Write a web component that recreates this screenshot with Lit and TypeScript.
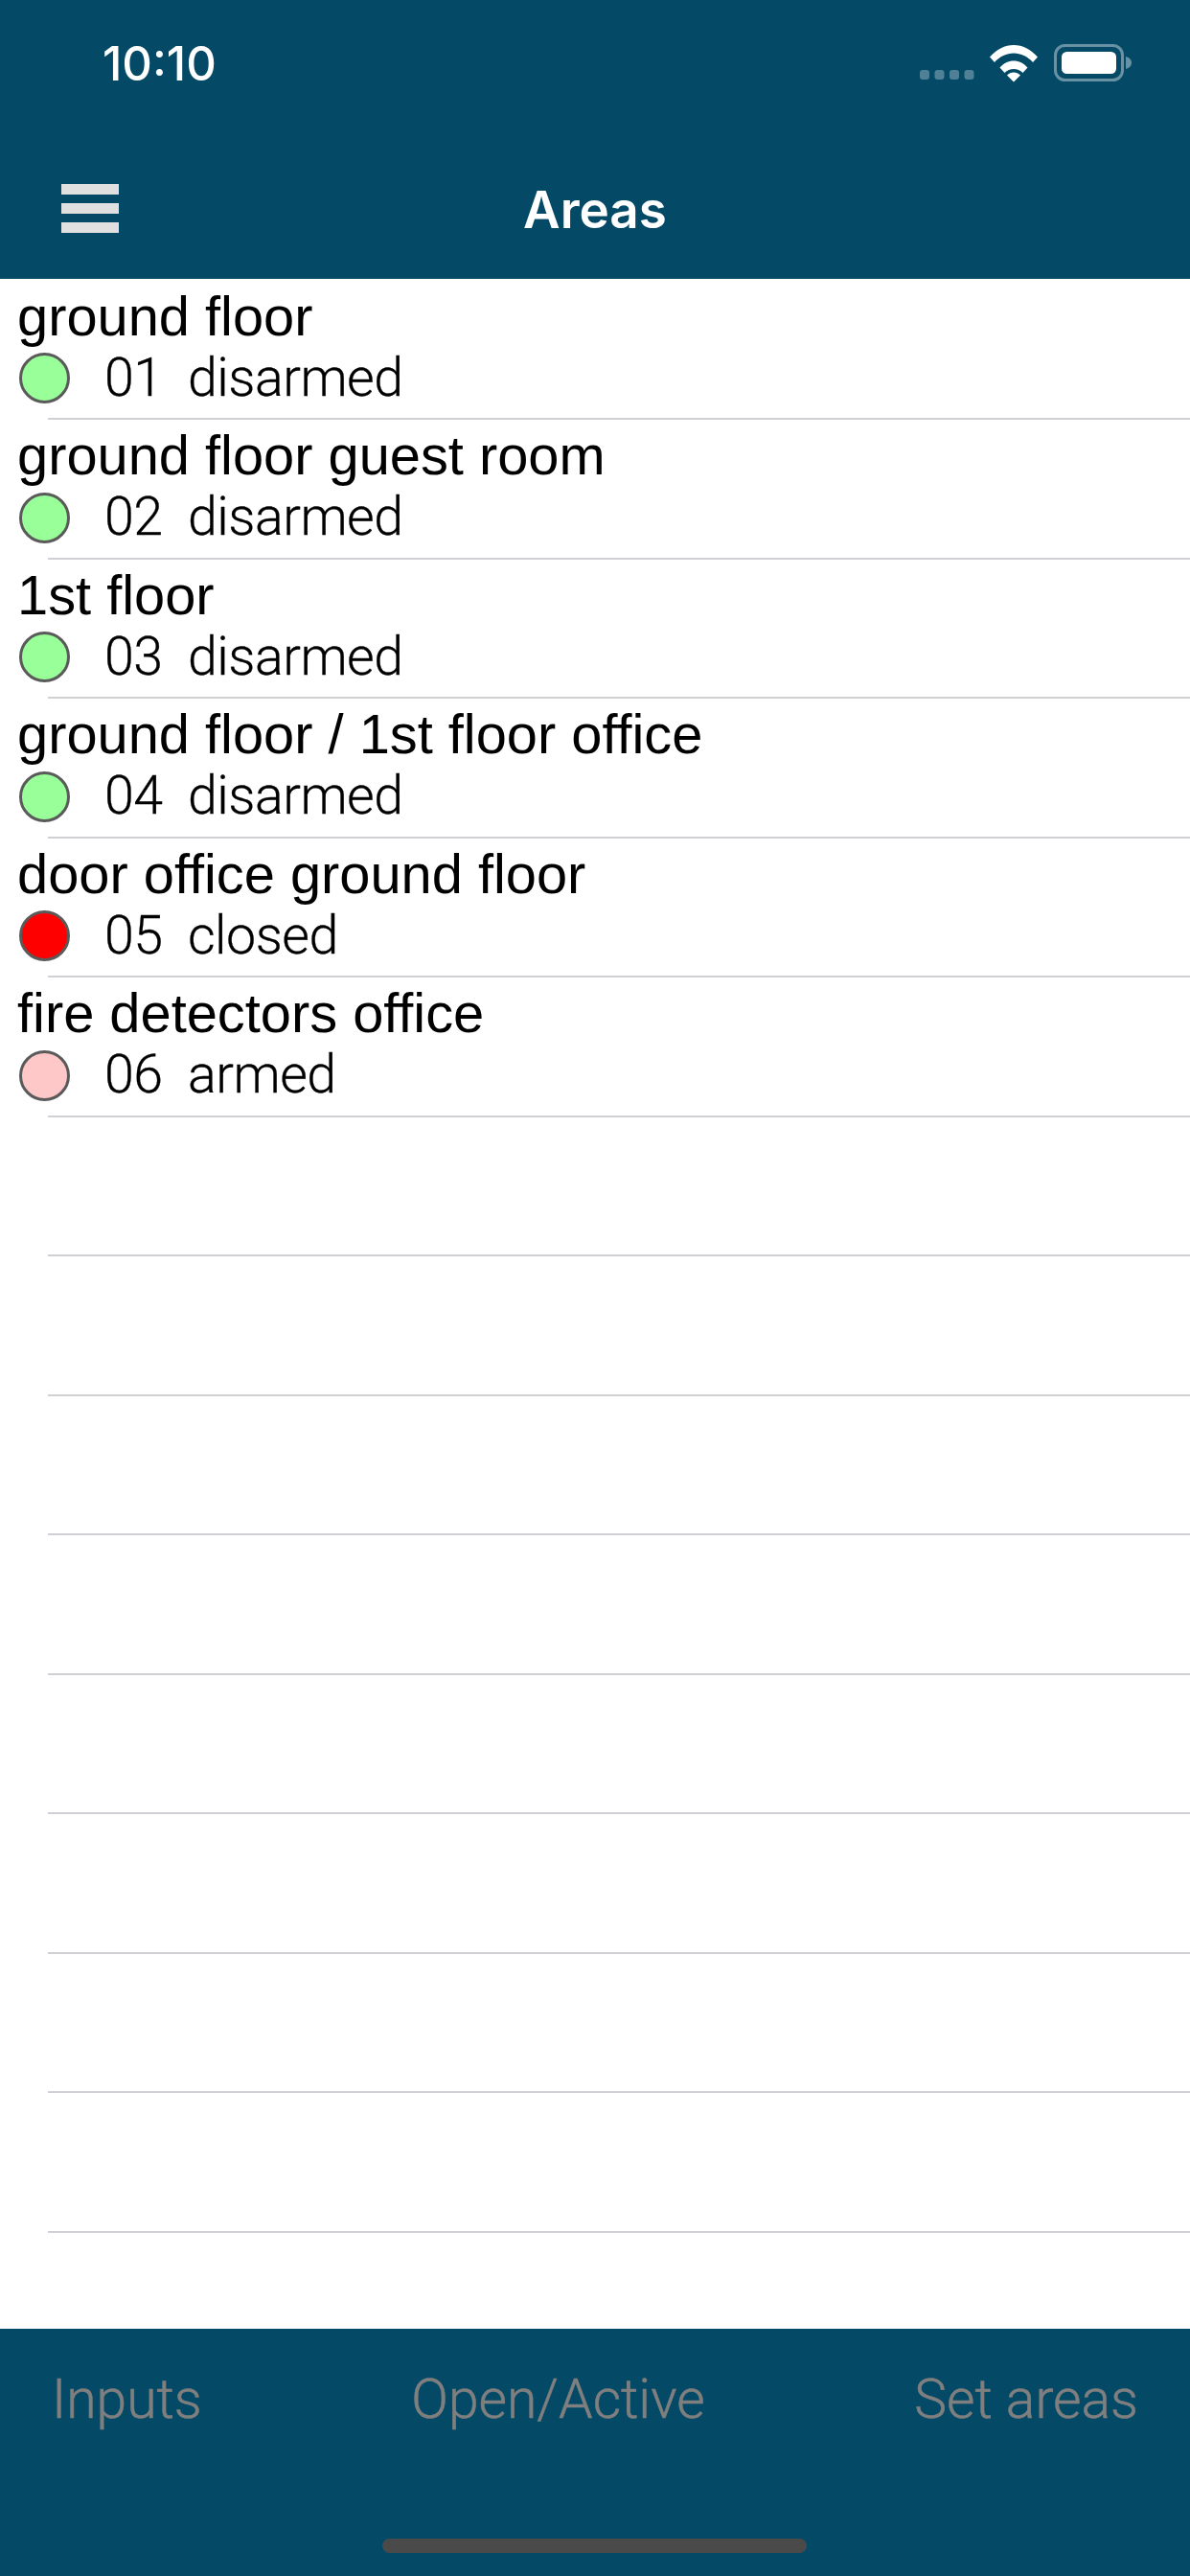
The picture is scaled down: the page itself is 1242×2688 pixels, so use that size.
import { LitElement, html, css } from 'lit';
import { customElement } from 'lit/decorators.js';

interface Area {
  name: string;
  num: string;
  status: string;
  color: string;
}

const AREAS: Area[] = [
  { name: 'ground floor', num: '01', status: 'disarmed', color: '#99ff99' },
  { name: 'ground floor guest room', num: '02', status: 'disarmed', color: '#99ff99' },
  { name: '1st floor', num: '03', status: 'disarmed', color: '#99ff99' },
  { name: 'ground floor / 1st floor office', num: '04', status: 'disarmed', color: '#99ff99' },
  { name: 'door office ground floor', num: '05', status: 'closed', color: '#ff0000' },
  { name: 'fire detectors office', num: '06', status: 'armed', color: '#ffc8c8' },
];

const EMPTY_ROWS = 8;

@customElement('app-root')
export class AppRoot extends LitElement {
  static styles = css`
    :host {
      display: flex;
      flex-direction: column;
      width: 1242px;
      height: 2688px;
      background: #fff;
      font-family: 'Liberation Sans', Arial, sans-serif;
      overflow: hidden;
    }

    header {
      height: 291px;
      background: #044a67;
      color: #fff;
      flex: none;
    }

    .status {
      display: flex;
      align-items: center;
      justify-content: space-between;
      height: 132px;
      padding: 0 60px 0 107px;
    }

    .time {
      font: 500 49px/1 Inter, 'Liberation Sans', sans-serif;
    }

    .status svg {
      display: block;
    }

    .nav {
      position: relative;
      display: flex;
      justify-content: center;
      align-items: center;
      box-sizing: border-box;
      height: 159px;
      padding-top: 16px;
      font: 600 53px/1 Inter, 'Liberation Sans', sans-serif;
    }

    .menu {
      position: absolute;
      left: 64px;
      top: 60px;
      display: flex;
      flex-direction: column;
      gap: 9px;
      width: 60px;
    }

    .menu span {
      height: 11px;
      background: #e0e0e0;
    }

    .list {
      flex: 1;
      padding-top: 1.5px;
    }

    .row {
      box-sizing: border-box;
      height: 143.5px;
      padding: 0 20px;
      overflow: hidden;
    }

    .sep {
      height: 2px;
      margin-left: 50px;
      background: #d0d0d4;
    }

    .name {
      font-size: 57.800px;
      line-height: 64px;
      margin: 5px 0 0 -2px;
      color: #000;
      white-space: nowrap;
      font-variant-ligatures: none;
    }

    .detail {
      display: flex;
      align-items: center;
      height: 62px;
      margin-top: 2px;
      font: 300 55.500px/62px Roboto, 'Liberation Sans', sans-serif;
      letter-spacing: -0.5px;
      -webkit-text-stroke: 0.3px #000;
      color: #000;
    }

    .dot {
      box-sizing: border-box;
      flex: none;
      width: 53px;
      height: 53px;
      border: 3px solid #5a5a5a;
      border-radius: 50%;
      margin-right: 36px;
    }

    .num {
      flex: none;
      width: 87px;
    }

    footer {
      position: relative;
      flex: none;
      height: 258px;
      background: #044a67;
      color: #7f7f7f;
    }

    .tabs {
      display: flex;
      justify-content: space-between;
      padding: 40px 54px 0 54px;
      font: 300 57px/1.2 Roboto, 'Liberation Sans', sans-serif;
      -webkit-text-stroke: 0.5px #7f7f7f;
    }

    .home {
      position: absolute;
      left: 399px;
      top: 219px;
      width: 443px;
      height: 15px;
      border-radius: 8px;
      background: #4a4a4a;
    }
  `;

  renderStatusIcons() {
    return html`
      <svg width="222" height="40" viewBox="0 0 222 40">
        <g fill="#fff" fill-opacity="0.3">
          <rect x="0" y="27" width="10" height="10" rx="3"></rect>
          <rect x="15.5" y="27" width="10" height="10" rx="3"></rect>
          <rect x="31" y="27" width="10" height="10" rx="3"></rect>
          <rect x="46.5" y="27" width="10" height="10" rx="3"></rect>
        </g>
        <path
          fill="#fff"
          d="M73 13.5C80 5.5 89 1 98 1s18 4.500 25 12.500l-5 5.500C112.500 13 105.500 9.500 98 9.500S83.500 13 78 19zM83.500 24.500C87.500 20 92.500 17.500 98 17.500s10.500 2.500 14.500 7l-5 5.500C105 27.500 101.500 26 98 26s-7 1.500-9.500 4zM91 32.500c2-2 4.500-3 7-3s5 1 7 3l-7 7z"
        ></path>
        <rect x="141.500" y="1.500" width="70" height="36" rx="10" fill="none" stroke="#fff" stroke-opacity="0.4" stroke-width="3"></rect>
        <rect x="148" y="8" width="57" height="23" rx="5.500" fill="#fff"></rect>
        <path fill="#fff" fill-opacity="0.4" d="M215 13c4 1 6 3.500 6 6.500s-2 5.500-6 6.500z"></path>
      </svg>
    `;
  }

  render() {
    return html`
      <header>
        <div class="status">
          <span class="time">10:10</span>
          ${this.renderStatusIcons()}
        </div>
        <div class="nav">
          <div class="menu"><span></span><span></span><span></span></div>
          Areas
        </div>
      </header>
      <div class="list">
        ${AREAS.map(a => html`
          <div class="row">
            <div class="name">${a.name}</div>
            <div class="detail">
              <span class="dot" style="background:${a.color}"></span>
              <span class="num">${a.num}</span>
              <span>${a.status}</span>
            </div>
          </div>
          <div class="sep"></div>
        `)}
        ${Array.from({ length: EMPTY_ROWS }, () => html`
          <div class="row"></div>
          <div class="sep"></div>
        `)}
      </div>
      <footer>
        <div class="tabs">
          <span>Inputs</span>
          <span>Open/Active</span>
          <span>Set areas</span>
        </div>
        <div class="home"></div>
      </footer>
    `;
  }
}
